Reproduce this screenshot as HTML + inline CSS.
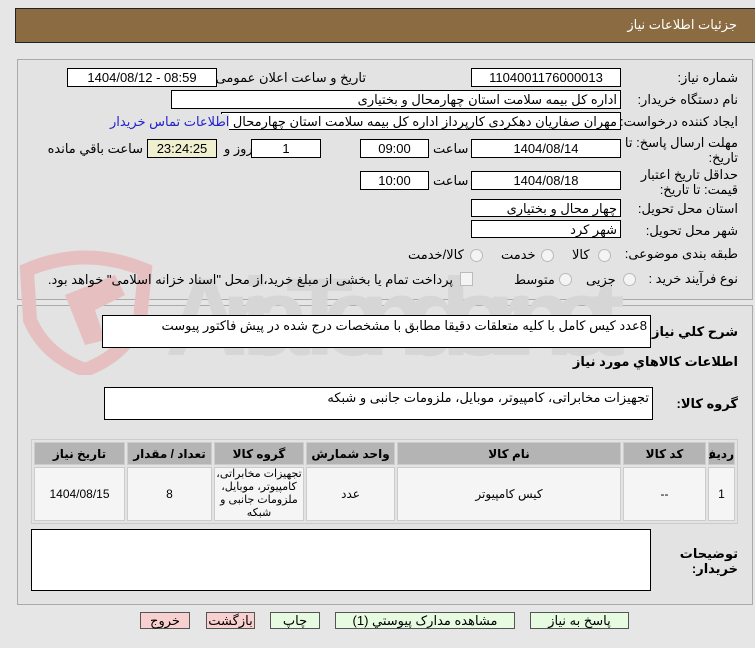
<!DOCTYPE html>
<html><head><meta charset="utf-8"><style>
body{margin:0;width:755px;height:648px;background:#e6e6e6;font-family:"Liberation Sans","DejaVu Sans",sans-serif;font-size:13px;color:#000;position:relative;overflow:hidden}
.a{position:absolute}
.f{position:absolute;background:#fff;border:1px solid #000;box-sizing:border-box;height:19px;line-height:17px;text-align:center;white-space:nowrap;overflow:hidden}
.r{text-align:right;padding-right:3px;direction:rtl}
.l{position:absolute;direction:rtl;text-align:right;white-space:nowrap}
.rad{position:absolute;width:11px;height:11px;border-radius:50%;border:1px solid #bbb;background:#f4f4f4}
.btn{position:absolute;top:612px;height:17px;border:1px solid #555;box-sizing:border-box;text-align:center;line-height:15px;font-size:13px}
td{border:1px solid #ccc;text-align:center;font-size:12px;padding:0;overflow:hidden;white-space:normal}
</style></head><body>
<div class="a" style="left:15px;top:8px;width:745px;height:35px;background:#8b6b41;border:1px solid #222;box-sizing:border-box"></div>
<div class="l" style="right:18px;top:17px;color:#fff;font-size:13px">جزئیات اطلاعات نیاز</div>

<div class="a" style="left:17px;top:59px;width:734px;height:239px;border:1px solid #aaa;background:#e3e3e3"></div>
<div class="a" style="left:17px;top:305px;width:734px;height:298px;border:1px solid #aaa;background:#e3e3e3"></div>

<svg class="a" style="left:15px;top:250px" width="620" height="125">
<path d="M12 20 Q70 -5 130 20 L125 70 Q110 105 70 120 Q30 105 15 70 Z" fill="none" stroke="#e6c0c0" stroke-width="14"/>
<path d="M50 45 L100 25 L110 45 L80 60 L90 90 L70 95 Z" fill="#e6c0c0"/>
<text x="150" y="105" font-family="Liberation Sans" font-weight="bold" font-size="110" fill="#d6d6d6" textLength="460">AriaTender.net</text>
</svg>

<div class="l" style="right:17px;top:70px">شماره نیاز:</div>
<div class="f" style="left:471px;top:68px;width:150px">1104001176000013</div>
<div class="l" style="right:389px;top:70px">تاریخ و ساعت اعلان عمومی:</div>
<div class="f" style="left:67px;top:68px;width:150px">1404/08/12 - 08:59</div>

<div class="l" style="right:17px;top:92px">نام دستگاه خریدار:</div>
<div class="f r" style="left:171px;top:90px;width:450px">اداره کل بیمه سلامت استان چهارمحال و بختیاری</div>

<div class="l" style="right:17px;top:114px">ایجاد کننده درخواست:</div>
<div class="f r" style="left:221px;top:112px;width:400px;height:18px">مهران صفاریان دهکردی کارپرداز اداره کل بیمه سلامت استان چهارمحال و بختیاری</div>
<div class="l" style="left:110px;top:114px;color:#2222cc;background:#e3e3e3">اطلاعات تماس خریدار</div>

<div class="l" style="right:17px;top:135px;line-height:15px">مهلت ارسال پاسخ: تا<br>تاریخ:</div>
<div class="f" style="left:471px;top:139px;width:150px">1404/08/14</div>
<div class="l" style="left:433px;top:141px">ساعت</div>
<div class="f" style="left:360px;top:139px;width:69px">09:00</div>
<div class="f" style="left:251px;top:139px;width:70px">1</div>
<div class="l" style="left:224px;top:141px">روز و</div>
<div class="f" style="left:147px;top:139px;width:70px;background:#f0f0d0">23:24:25</div>
<div class="l" style="right:612px;top:141px">ساعت باقي مانده</div>

<div class="l" style="right:17px;top:167px;line-height:15px">حداقل تاریخ اعتبار<br>قیمت: تا تاریخ:</div>
<div class="f" style="left:471px;top:171px;width:150px">1404/08/18</div>
<div class="l" style="left:433px;top:173px">ساعت</div>
<div class="f" style="left:360px;top:171px;width:69px">10:00</div>

<div class="l" style="right:17px;top:201px">استان محل تحویل:</div>
<div class="f r" style="left:471px;top:199px;width:150px;height:18px">چهار محال و بختیاری</div>
<div class="l" style="right:17px;top:223px">شهر محل تحویل:</div>
<div class="f r" style="left:471px;top:220px;width:150px;height:18px">شهر کرد</div>

<div class="l" style="right:17px;top:246px">طبقه بندی موضوعی:</div>
<div class="rad" style="left:598px;top:249px"></div><div class="l" style="left:572px;top:247px">کالا</div>
<div class="rad" style="left:541px;top:249px"></div><div class="l" style="left:501px;top:247px">خدمت</div>
<div class="rad" style="left:470px;top:249px"></div><div class="l" style="left:408px;top:247px">کالا/خدمت</div>

<div class="l" style="right:17px;top:271px">نوع فرآیند خرید :</div>
<div class="rad" style="left:623px;top:273px"></div><div class="l" style="left:586px;top:272px">جزیی</div>
<div class="rad" style="left:559px;top:273px"></div><div class="l" style="left:514px;top:272px">متوسط</div>
<div class="a" style="left:460px;top:272px;width:11px;height:12px;border:1px solid #bbb;background:#f4f4f4"></div>
<div class="l" style="right:302px;top:272px">پرداخت تمام یا بخشی از مبلغ خرید،از محل "اسناد خزانه اسلامی" خواهد بود.</div>

<div class="l" style="right:17px;top:324px;font-weight:bold">شرح کلي نياز:</div>
<div class="f r" style="left:102px;top:315px;width:549px;height:33px;text-align:right;line-height:20px">8عدد کیس کامل با کلیه متعلقات دقیقا مطابق با مشخصات  درج شده در پیش فاکتور پیوست</div>
<div class="l" style="right:17px;top:354px;font-weight:bold">اطلاعات کالاهاي مورد نياز</div>
<div class="l" style="right:17px;top:396px;font-weight:bold">گروه کالا:</div>
<div class="f r" style="left:104px;top:387px;width:549px;height:33px;text-align:right;line-height:20px">تجهیزات مخابراتی، کامپیوتر، موبایل، ملزومات جانبی و شبکه</div>

<table class="a" style="left:31px;top:439px;width:707px;height:83px;border-collapse:separate;border-spacing:2px;border:1px solid #ccc;background:#e3e3e3;direction:rtl;table-layout:fixed">
<colgroup><col style="width:27px"><col style="width:83px"><col><col style="width:89px"><col style="width:90px"><col style="width:85px"><col style="width:91px"></colgroup>
<tr style="background:#b4b4b4;height:23px;font-weight:bold"><td>ردیف</td><td>کد کالا</td><td>نام کالا</td><td>واحد شمارش</td><td>گروه کالا</td><td>تعداد / مقدار</td><td>تاریخ نیاز</td></tr>
<tr style="background:#f5f5f5;height:54px"><td>1</td><td>--</td><td>کیس کامپیوتر</td><td>عدد</td><td style="line-height:13px;font-size:11px">تجهیزات مخابراتی، کامپیوتر، موبایل، ملزومات جانبی و شبکه</td><td>8</td><td>1404/08/15</td></tr>
</table>

<div class="l" style="right:17px;top:546px;font-weight:bold;line-height:15px">توضیحات<br>خریدار:</div>
<div class="f" style="left:31px;top:529px;width:620px;height:62px"></div>

<div class="btn" style="left:140px;width:50px;background:#f8d0d0">خروج</div>
<div class="btn" style="left:206px;width:49px;background:#f8d0d0">بازگشت</div>
<div class="btn" style="left:270px;width:50px;background:#e6fbe0">چاپ</div>
<div class="btn" style="left:335px;width:180px;background:#e6fbe0">مشاهده مدارک پیوستي (1)</div>
<div class="btn" style="left:530px;width:99px;background:#e6fbe0">پاسخ به نیاز</div>
</body></html>
